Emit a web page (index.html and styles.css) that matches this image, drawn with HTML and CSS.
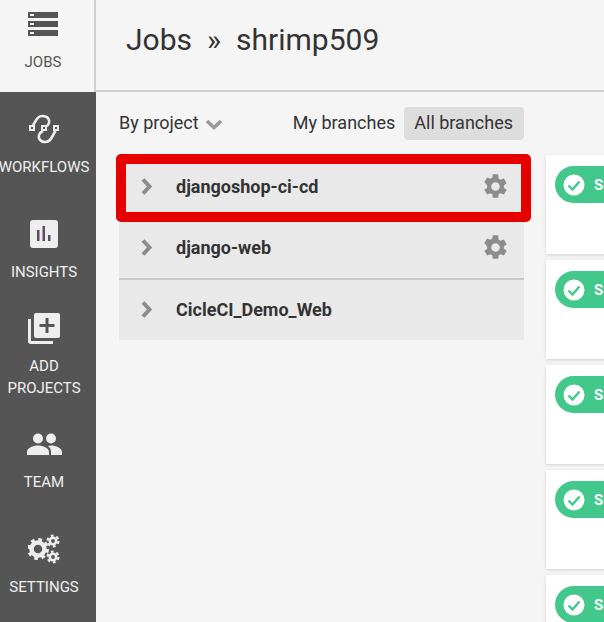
FILE: index.html
```html
<!DOCTYPE html>
<html lang="en">
<head>
<meta charset="utf-8">
<title>Jobs</title>
<link rel="stylesheet" href="styles.css">
</head>
<body>
<div class="app">
  <nav class="sidebar">
    <a class="nav-item nav-active">
      <svg class="nav-icon" width="30" height="24" viewBox="0 0 30 24"><path fill="#555" d="M0 0h30v6H0zM0 9h30v6H0zM0 18h30v6H0z"/><path fill="#f5f5f5" d="M2 2h4v2H2zM2 11h4v2H2zM2 20h4v2H2z"/></svg>
      <span>JOBS</span>
    </a>
    <div class="nav-list">
      <a class="nav-item nav-workflows">
        <svg class="nav-icon" width="32" height="30" viewBox="0 0 32 30"><g fill="none" stroke="#eee" stroke-width="2.600"><path d="M4.500 12C8 7 9 2 14.500 2C20 2 22 6 21 9C20.500 11 19 12 17 13"/><path d="M27.500 17C24 22 23 28 17.500 28C12 28 10 24 11 21C11.500 19 13 18 15 17"/></g><path fill="#eee" d="M1 11h6v6H1zM13 11h6v6h-6zM25 11h6v6h-6z"/><path fill="#555" d="M3 13h2v2H3zM15 13h2v2h-2zM27 13h2v2h-2z"/></svg>
        <span>WORKFLOWS</span>
      </a>
      <a class="nav-item nav-insights">
        <svg class="nav-icon" width="28" height="28" viewBox="0 0 28 28"><rect width="28" height="28" rx="3" fill="#eee"/><path fill="#5c4a66" d="M7 10h2.500v11H7zM12.500 6H15v15h-2.500zM18 15h2.500v6H18z"/></svg>
        <span>INSIGHTS</span>
      </a>
      <a class="nav-item nav-add">
        <svg class="nav-icon" width="32" height="31" viewBox="0 0 32 31"><path fill="#eee" d="M0 6h3v22h22v3H3a3 3 0 0 1-3-3z"/><rect x="6" y="0" width="26" height="25" rx="2" fill="#eee"/><path fill="#555" d="M17.500 5h3v6h6v3h-6v6h-3v-6h-6v-3h6z"/></svg>
        <span>ADD<br>PROJECTS</span>
      </a>
      <a class="nav-item nav-team">
        <svg class="nav-icon" width="35" height="22" viewBox="0 0 35 22"><circle cx="11" cy="5.500" r="5" fill="#eee"/><circle cx="24" cy="5.500" r="5" fill="#eee"/><path fill="#eee" d="M0 22v-3c0-4 6-6.500 11-6.500s11 2.500 11 6.500v3z"/><path fill="#eee" d="M24 22v-3.500c0-2.400-1.300-4.200-3.200-5.400 1.100-.4 2.200-.6 3.200-.6 4.800 0 11 2.500 11 6.500V22z"/></svg>
        <span>TEAM</span>
      </a>
      <a class="nav-item nav-settings">
        <svg class="nav-icon" width="32" height="30" viewBox="0 0 32 30"><g fill="none" stroke="#eee"><circle cx="10" cy="15" r="6.500" stroke-width="4.500"/><circle cx="10" cy="15" r="9.500" stroke-width="3" stroke-dasharray="3.700 3.760"/><circle cx="25" cy="7" r="3.200" stroke-width="2.600"/><circle cx="25" cy="7" r="5.400" stroke-width="2.200" stroke-dasharray="2.800 2.850"/><circle cx="25" cy="23" r="3.200" stroke-width="2.600"/><circle cx="25" cy="23" r="5.400" stroke-width="2.200" stroke-dasharray="2.800 2.850"/></g></svg>
        <span>SETTINGS</span>
      </a>
    </div>
  </nav>
  <main class="main">
    <header class="header">
      <h1 class="title">Jobs<span class="sep">»</span>shrimp509</h1>
    </header>
    <div class="content">
      <section class="projects">
        <div class="filters">
          <span class="by-project">By project
            <svg width="18" height="11" viewBox="0 0 18 11"><path d="M2 2l7 6.500L16 2" fill="none" stroke="#999" stroke-width="3.600"/></svg>
          </span>
          <div class="branches">
            <span class="branch">My branches</span>
            <span class="branch branch-on">All branches</span>
          </div>
        </div>
        <ul class="project-list">
          <li class="project project-first">
            <svg class="chev" width="12" height="17" viewBox="0 0 12 17"><path d="M2 1.500l6.500 7-6.500 7" fill="none" stroke="#8c8c8c" stroke-width="4"/></svg>
            <span class="project-name">djangoshop-ci-cd</span>
            <svg class="gear" width="27" height="27" viewBox="0 0 24 24"><path fill="#8c8c8c" d="M19.400 13a7.700 7.700 0 0 0 0-2l2.500-1.900-2.400-4.200-3 1.200a7.600 7.600 0 0 0-1.700-1L14.400 1H9.600l-.4 3.100c-.6.300-1.200.6-1.700 1l-3-1.200-2.400 4.200L4.600 11a7.700 7.700 0 0 0 0 2l-2.500 1.900 2.400 4.200 3-1.200c.5.400 1.100.700 1.700 1l.4 3.100h4.800l.4-3.100c.6-.3 1.200-.6 1.700-1l3 1.200 2.400-4.200zM12 15.800a3.800 3.800 0 1 1 0-7.600 3.800 3.800 0 0 1 0 7.600z"/></svg>
            <div class="highlight"></div>
          </li>
          <li class="project project-middle">
            <svg class="chev" width="12" height="17" viewBox="0 0 12 17"><path d="M2 1.500l6.500 7-6.500 7" fill="none" stroke="#8c8c8c" stroke-width="4"/></svg>
            <span class="project-name">django-web</span>
            <svg class="gear" width="27" height="27" viewBox="0 0 24 24"><path fill="#8c8c8c" d="M19.400 13a7.700 7.700 0 0 0 0-2l2.500-1.900-2.400-4.200-3 1.200a7.600 7.600 0 0 0-1.700-1L14.400 1H9.600l-.4 3.100c-.6.300-1.200.6-1.700 1l-3-1.200-2.400 4.200L4.600 11a7.700 7.700 0 0 0 0 2l-2.500 1.900 2.400 4.200 3-1.200c.5.400 1.100.700 1.700 1l.4 3.100h4.800l.4-3.100c.6-.3 1.200-.6 1.700-1l3 1.200 2.400-4.200zM12 15.800a3.800 3.800 0 1 1 0-7.600 3.800 3.800 0 0 1 0 7.600z"/></svg>
          </li>
          <li class="project project-last">
            <svg class="chev" width="12" height="17" viewBox="0 0 12 17"><path d="M2 1.500l6.500 7-6.500 7" fill="none" stroke="#8c8c8c" stroke-width="4"/></svg>
            <span class="project-name">CicleCI_Demo_Web</span>
          </li>
        </ul>
      </section>
      <section class="cards">
        <article class="card"><div class="pill"><svg width="22" height="22" viewBox="0 0 22 22"><circle cx="11" cy="11" r="10.500" fill="#fff"/><path d="M5.500 11.500l4 4 7-8" fill="none" stroke="#42c88a" stroke-width="2.400"/></svg><span>Success</span></div></article>
        <article class="card"><div class="pill"><svg width="22" height="22" viewBox="0 0 22 22"><circle cx="11" cy="11" r="10.500" fill="#fff"/><path d="M5.500 11.500l4 4 7-8" fill="none" stroke="#42c88a" stroke-width="2.400"/></svg><span>Success</span></div></article>
        <article class="card"><div class="pill"><svg width="22" height="22" viewBox="0 0 22 22"><circle cx="11" cy="11" r="10.500" fill="#fff"/><path d="M5.500 11.500l4 4 7-8" fill="none" stroke="#42c88a" stroke-width="2.400"/></svg><span>Success</span></div></article>
        <article class="card"><div class="pill"><svg width="22" height="22" viewBox="0 0 22 22"><circle cx="11" cy="11" r="10.500" fill="#fff"/><path d="M5.500 11.500l4 4 7-8" fill="none" stroke="#42c88a" stroke-width="2.400"/></svg><span>Success</span></div></article>
        <article class="card"><div class="pill"><svg width="22" height="22" viewBox="0 0 22 22"><circle cx="11" cy="11" r="10.500" fill="#fff"/><path d="M5.500 11.500l4 4 7-8" fill="none" stroke="#42c88a" stroke-width="2.400"/></svg><span>Success</span></div></article>
      </section>
    </div>
  </main>
</div>
</body>
</html>
```
FILE: styles.css
```css
* { box-sizing: border-box; }
html, body { margin: 0; height: 100%; overflow: hidden; }
body { background: #f5f5f5; font-family: Roboto, "Liberation Sans", sans-serif; color: #333; }
.app { display: flex; width: 604px; height: 622px; overflow: hidden; }
.sidebar { width: 96px; flex: none; display: flex; flex-direction: column; background: #555; }
.nav-item { display: flex; flex-direction: column; align-items: center; padding-right: 8px; color: #f0f0f0; font-size: 15px; line-height: 22px; text-align: center; white-space: nowrap; }
.nav-icon { display: block; flex: none; }
.nav-active { height: 92px; background: #f5f5f5; color: #555; border-right: 2px solid #d0d0d0; padding-top: 12px; }
.nav-active span { margin-top: 15px; }
.nav-list { display: flex; flex-direction: column; }
.nav-workflows { height: 105px; padding-top: 22px; }
.nav-workflows span { margin-top: 12px; }
.nav-insights { height: 116px; padding-top: 23px; }
.nav-insights span { margin-top: 13px; }
.nav-add { height: 120px; }
.nav-add span { margin-top: 11px; }
.nav-team { height: 101px; }
.nav-team span { margin-top: 16px; }
.nav-settings span { margin-top: 12px; }
.main { flex: 1; min-width: 0; }
.header { height: 92px; border-bottom: 2px solid #d0d0d0; padding: 20px 0 0 30px; }
.title { margin: 0; font-size: 30px; font-weight: 400; line-height: 40px; color: #333; white-space: nowrap; }
.sep { margin: 0 15px; }
.content { display: flex; align-items: flex-start; padding-left: 23px; }
.projects { width: 405px; flex: none; }
.filters { display: flex; justify-content: space-between; align-items: center; height: 63px; }
.by-project { display: flex; align-items: center; gap: 6px; padding-bottom: 2px; font-size: 18px; }
.by-project svg { margin-top: 4px; }
.branches { display: flex; align-items: center; gap: 9px; font-size: 18px; }
.branch { line-height: 32px; padding-bottom: 1px; border-radius: 4px; }
.branch-on { background: #ddd; padding: 0 11px 1px 10px; }
.project-list { list-style: none; margin: 0; padding: 0; }
.project { position: relative; display: flex; align-items: center; height: 62px; background: #e9e9e9; padding: 0 15px 0 22px; }
.project-first { height: 63px; padding-bottom: 1px; z-index: 1; }
.project-middle { height: 62px; border-bottom: 2px solid #c8c8c8; padding-bottom: 2px; }
.project-last { height: 60px; padding-bottom: 2px; }
.project-name { flex: 1; margin-left: 23px; font-size: 18px; font-weight: 700; color: #333; }
.chev { flex: none; }
.gear { flex: none; }
.highlight { position: absolute; left: -3px; top: -1px; width: 415px; height: 68px; border: 10px solid #e60000; border-radius: 5px; }
.cards { margin-left: 22px; padding-top: 63px; display: flex; flex-direction: column; gap: 6px; width: 200px; flex: none; }
.card { height: 99px; flex: none; background: #fff; box-shadow: 0 1px 3px rgba(0, 0, 0, .15); padding: 11px 0 0 9px; }
.pill { display: flex; align-items: center; gap: 9px; width: 200px; height: 37px; padding-left: 8px; border-radius: 18.500px; background: #42c88a; color: #fff; font-size: 15px; font-weight: 700; }
```
